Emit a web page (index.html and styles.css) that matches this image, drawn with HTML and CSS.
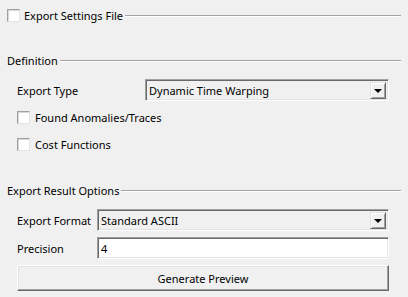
FILE: index.html
```html
<!DOCTYPE html>
<html lang="en">

<head>
	<meta charset="UTF-8" />
	<title>Export</title>
	<link rel="stylesheet" href="styles.css">
</head>

<body>
	<div class="panel">
		<div class="head head-first">
			<span class="check"></span>
			<span class="head-text">Export Settings File</span>
			<span class="line"></span>
		</div>

		<div class="head head-def">
			<span class="head-text">Definition</span>
			<span class="line"></span>
		</div>
		<div class="field field-type">
			<span class="label label-wide">Export Type</span>
			<div class="combo">
				<span class="combo-text">Dynamic Time Warping</span>
				<span class="drop"><span class="arrow"></span></span>
			</div>
		</div>
		<div class="opt opt-first">
			<span class="check"></span>
			<span>Found Anomalies/Traces</span>
		</div>
		<div class="opt">
			<span class="check"></span>
			<span>Cost Functions</span>
		</div>

		<div class="head head-res">
			<span class="head-text">Export Result Options</span>
			<span class="line"></span>
		</div>
		<div class="field field-format">
			<span class="label">Export Format</span>
			<div class="combo">
				<span class="combo-text">Standard ASCII</span>
				<span class="drop"><span class="arrow"></span></span>
			</div>
		</div>
		<div class="field field-prec">
			<span class="label">Precision</span>
			<div class="edit">4</div>
		</div>
		<div class="field field-btn">
			<div class="button">Generate Preview</div>
		</div>
	</div>
</body>

</html>
```

FILE: styles.css
```css
* {
	padding: 0px;
	margin: 0px;
	box-sizing: border-box;
}

body {
	width: 408px;
	height: 297px;
	background-color: #f0f0f0;
	font-family: "Noto Sans", "Open Sans", sans-serif;
	font-size: 11px;
	color: #000;
	overflow: hidden;
}

.panel {
	padding: 9px 7px 0 7px;
	display: flex;
	flex-direction: column;
}

.head {
	display: flex;
	align-items: center;
	height: 13px;
}

.head-text {
	white-space: nowrap;
}

.head-first .head-text {
	margin-left: 4px;
}

.line {
	flex: 1;
	height: 2px;
	margin-left: 2px;
	border-top: 1px solid #a0a0a0;
	border-bottom: 1px solid #fff;
}

.head-def {
	margin-top: 32px;
}

.head-res {
	margin-top: 33px;
}

.check {
	width: 13px;
	height: 13px;
	background-color: #fff;
	border: 1px solid;
	border-color: #a0a0a0 #e3e3e3 #e3e3e3 #a0a0a0;
	box-shadow: inset 1px 1px 0 #d8d8d8;
	flex: none;
}

.field {
	display: flex;
	align-items: center;
	padding: 0 12px 0 10px;
}

.field-type {
	margin-top: 12px;
}

.field-format {
	margin-top: 12px;
}

.field-prec {
	margin-top: 6px;
}

.field-btn {
	margin-top: 6px;
}

.label {
	width: 80px;
	flex: none;
	white-space: nowrap;
}

.label-wide {
	width: 128px;
}

.combo,
.edit {
	flex: 1;
	height: 22px;
	display: flex;
	align-items: center;
	border: 1px solid;
	border-color: #a0a0a0 #fff #fff #a0a0a0;
	box-shadow: inset 1px 1px 0 #696969, inset -1px -1px 0 #e3e3e3;
	padding: 0 2px 0 3px;
}

.combo-text {
	flex: 1;
	white-space: nowrap;
}

.edit {
	background-color: #fff;
}

.drop {
	width: 16px;
	height: 17px;
	background-color: #f0f0f0;
	border: 1px solid;
	border-color: #e3e3e3 #696969 #696969 #e3e3e3;
	box-shadow: inset 1px 1px 0 #fff, inset -1px -1px 0 #a0a0a0;
	display: flex;
	align-items: center;
	justify-content: center;
}

.arrow {
	width: 0;
	height: 0;
	border-left: 4px solid transparent;
	border-right: 4px solid transparent;
	border-top: 4px solid #000;
	margin-top: 1px;
}

.opt {
	display: flex;
	align-items: center;
	height: 13px;
	padding-left: 10px;
	gap: 5px;
}

.opt-first {
	margin-top: 10px;
}

.opt + .opt {
	margin-top: 14px;
}

.button {
	flex: 1;
	height: 26px;
	display: flex;
	align-items: center;
	justify-content: center;
	border: 1px solid;
	border-color: #fff #696969 #696969 #fff;
	box-shadow: inset -1px -1px 0 #a0a0a0, inset 1px 1px 0 #e3e3e3;
}
```
